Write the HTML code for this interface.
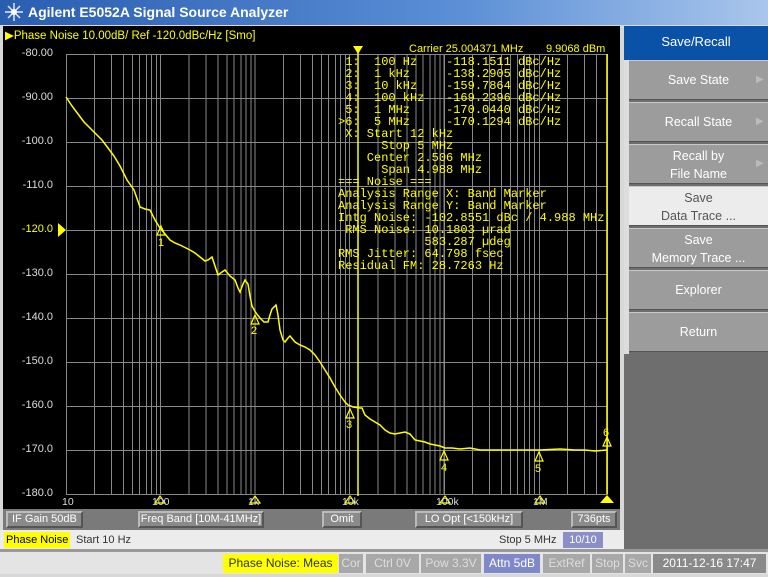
<!DOCTYPE html>
<html><head><meta charset="utf-8"><style>
*{margin:0;padding:0;box-sizing:border-box}
body{width:768px;height:577px;overflow:hidden;background:#d8d8d8;font-family:"Liberation Sans",sans-serif;position:relative}
.a{position:absolute}
#title{left:0;top:0;width:768px;height:25px;background:linear-gradient(to right,#2a5db0,#5b8fd6 60%,#a9c6ec);color:#fff;font-weight:bold;font-size:14px;line-height:25px;padding-left:28px}
#blk{left:3px;top:26px;width:617px;height:504px;background:#000}
.y{color:#ddd;font-size:11px;width:50px;text-align:right}
.mono{font-family:"Liberation Mono",monospace;font-size:12px;color:#ff0;line-height:12px;white-space:pre}
.bb{top:511px;height:17px;border:2px solid #bbb;border-right-color:#555;border-bottom-color:#555;background:#8a8a8a;color:#fff;font-size:11px;line-height:13px;text-align:center}
.btn{left:629px;width:139px;height:40px;background:#9c9c9c;color:#fff;font-size:12.5px;text-align:center;border-top:1px solid #c8c8c8;border-bottom:1px solid #555}
.st{top:554px;height:19px;font-size:12px;line-height:19px;color:#ddd;background:#a8a8a8;text-align:center}
</style></head><body>
<div id="title" class="a">Agilent E5052A Signal Source Analyzer</div>
<svg class="a" style="left:4px;top:2px" width="20" height="20" viewBox="0 0 20 20"><g stroke="#dfe8ff" stroke-width="1.5"><line x1="10" y1="1" x2="10" y2="19"/><line x1="1" y1="10" x2="19" y2="10"/><line x1="4" y1="4" x2="16" y2="16"/><line x1="16" y1="4" x2="4" y2="16"/></g><circle cx="10" cy="10" r="3" fill="#fff"/></svg>
<div id="blk" class="a"></div>
<div class="a" style="left:5px;top:28px;color:#ff0;font-size:11.5px">&#9654;Phase Noise 10.00dB/ Ref -120.0dBc/Hz [Smo]</div>
<div class="a y" style="left:3px;top:47px">-80.00</div>
<div class="a y" style="left:3px;top:91px">-90.00</div>
<div class="a y" style="left:3px;top:135px">-100.0</div>
<div class="a y" style="left:3px;top:179px">-110.0</div>
<div class="a y" style="left:3px;top:223px;color:#ff0">-120.0</div>
<div class="a y" style="left:3px;top:267px">-130.0</div>
<div class="a y" style="left:3px;top:311px">-140.0</div>
<div class="a y" style="left:3px;top:355px">-150.0</div>
<div class="a y" style="left:3px;top:399px">-160.0</div>
<div class="a y" style="left:3px;top:443px">-170.0</div>
<div class="a y" style="left:3px;top:487px">-180.0</div>
<svg class="a" style="left:0;top:0" width="620" height="530">
<g stroke="#888" stroke-width="1" fill="none">
<rect x="66.5" y="54.5" width="541" height="440"/>
<path d="M66 98.5H607M66 142.5H607M66 186.5H607M66 230.5H607M66 274.5H607M66 318.5H607M66 362.5H607M66 406.5H607M66 450.5H607"/>
<path id="dec" d="M94.5 54V494M111.5 54V494M123.5 54V494M132.5 54V494M139.5 54V494M146.5 54V494M151.5 54V494M156.5 54V494M160.5 54V494"/>
<use href="#dec" x="94.5"/><use href="#dec" x="189"/><use href="#dec" x="283.5"/>
<path d="M444.5 54V494M472.5 54V494M489.5 54V494M501.5 54V494M510.5 54V494M517.5 54V494M524.5 54V494M529.5 54V494M534.5 54V494M539.5 54V494M567.5 54V494M584.5 54V494M596.5 54V494"/>
</g>
<polygon points="58,223 66,230 58,237" fill="#ff0"/>
<g stroke="#ff0" stroke-width="1.5" fill="none">
<line x1="358" y1="46" x2="358" y2="496"/>
<line x1="607" y1="54" x2="607" y2="494"/>
<polyline points="66,97 72,106 78,114 84,122 90,128 96,134 102,140 108,148 114,156 120,166 127,180 134,190 140,207 145,209 150,210 155,220 160,228 165,234 170,240 175,243 180,245 186,248 190,250 195,253 200,257 205,261 208,260 212,257 215,266 218,275 222,272 225,270 230,276 235,280 238,288 240,292 243,284 245,280 248,284 250,296 252,306 256,313 260,318 264,322 268,322 270,315 272,309 276,305 278,315 280,330 283,340 285,342 288,338 290,336 295,342 300,345 305,347 310,350 315,355 320,362 325,370 330,378 335,387 340,395 345,402 348,405 353,407 360,408 362,408 365,415 370,419 375,422 380,425 385,430 390,433 395,434 400,433 405,432 410,434 415,440 420,441 425,442 430,444 435,445 440,446 445,448 452,448 460,449 470,448 480,450 500,450 520,450 540,450 560,449 575,450 585,450 595,451 607,450"/>
</g>
<polygon points="353,46 363,46 358,54" fill="#ff0"/>
<polygon points="600,503 614,503 607,495" fill="#ff0"/>
<g fill="none" stroke="#ff0" stroke-width="1.2">
<path d="M157,235 L161,226 L165,235 Z"/><path d="M251,324 L255,315 L259,324 Z"/><path d="M346,418 L350,409 L354,418 Z"/><path d="M440,460 L444,451 L448,460 Z"/><path d="M535,461 L539,452 L543,461 Z"/><path d="M603,446 L607,437 L611,446 Z"/>
<path d="M155,503 L160,496 L165,503 Z"/><path d="M250,503 L255,496 L260,503 Z"/><path d="M345,503 L350,496 L355,503 Z"/><path d="M440,503 L445,496 L450,503 Z"/><path d="M535,503 L540,496 L545,503 Z"/>
</g>
<g fill="#ff0" font-size="11" font-family="Liberation Sans"><text x="158" y="246">1</text><text x="251" y="334">2</text><text x="346" y="428">3</text><text x="441" y="471">4</text><text x="535" y="472">5</text><text x="603" y="436">6</text></g>
<g fill="#ddd" font-size="10.5" font-family="Liberation Sans"><text x="62" y="505">10</text><text x="152" y="505">100</text><text x="248" y="505">1k</text><text x="342" y="505">10k</text><text x="436" y="505">100k</text><text x="533" y="505">1M</text></g>
</svg>
<div class="a" style="left:409px;top:43px;color:#ff0;font-size:11px">Carrier 25.004371 MHz</div>
<div class="a" style="left:546px;top:43px;color:#ff0;font-size:11px">9.9068 dBm</div>
<div class="a mono" style="left:338px;top:56px"> 1:  100 Hz    -118.1511 dBc/Hz
 2:  1 kHz     -138.2905 dBc/Hz
 3:  10 kHz    -159.7864 dBc/Hz
 4:  100 kHz   -169.2396 dBc/Hz
 5:  1 MHz     -170.0440 dBc/Hz
&gt;6:  5 MHz     -170.1294 dBc/Hz
 X: Start 12 kHz
      Stop 5 MHz
    Center 2.506 MHz
      Span 4.988 MHz
=== Noise ===
Analysis Range X: Band Marker
Analysis Range Y: Band Marker
Intg Noise: -102.8551 dBc / 4.988 MHz
 RMS Noise: 10.1803 µrad
            583.287 µdeg
RMS Jitter: 64.798 fsec
Residual FM: 28.7263 Hz</div>
<div class="a" style="left:3px;top:509px;width:617px;height:21px;background:#7a7a7a"></div>
<div class="a bb" style="left:6px;width:77px;text-align:left;padding-left:4px">IF Gain 50dB</div>
<div class="a bb" style="left:138px;width:126px">Freq Band [10M-41MHz]</div>
<div class="a bb" style="left:322px;width:40px">Omit</div>
<div class="a bb" style="left:415px;width:108px">LO Opt [&lt;150kHz]</div>
<div class="a bb" style="left:571px;width:46px">736pts</div>
<div class="a" style="left:0;top:530px;width:624px;height:19px;background:#ececec"></div>
<div class="a" style="left:4px;top:532px;height:16px;background:#ff0;font-size:11px;line-height:16px;padding:0 2px">Phase Noise</div>
<div class="a" style="left:76px;top:532px;font-size:11px;line-height:16px;color:#333">Start 10 Hz</div>
<div class="a" style="left:499px;top:532px;font-size:11px;line-height:16px;color:#333">Stop 5 MHz</div>
<div class="a" style="left:563px;top:532px;width:40px;height:16px;background:#8a8fc8;color:#fff;font-size:11px;line-height:16px;text-align:center">10/10</div>
<div class="a" style="left:0;top:549px;width:768px;height:3px;background:#999"></div>
<div class="a" style="left:0;top:552px;width:768px;height:22px;background:#e4e4e4"></div>
<div class="a" style="left:223px;top:554px;width:115px;height:19px;background:#ff0;font-size:12px;line-height:19px;text-align:center;color:#333">Phase Noise: Meas</div>
<div class="a st" style="left:339px;width:24px">Cor</div>
<div class="a st" style="left:366px;width:53px">Ctrl 0V</div>
<div class="a st" style="left:421px;width:60px">Pow 3.3V</div>
<div class="a st" style="left:484px;width:56px;background:#7f88c8;color:#fff">Attn 5dB</div>
<div class="a st" style="left:543px;width:47px">ExtRef</div>
<div class="a st" style="left:592px;width:31px">Stop</div>
<div class="a st" style="left:625px;width:26px">Svc</div>
<div class="a st" style="left:653px;width:113px;background:#8a8a8a;color:#fff">2011-12-16 17:47</div>
<div class="a" style="left:624px;top:26px;width:144px;height:523px;background:#6e6e6e"></div>
<div class="a" style="left:624px;top:26px;width:144px;height:34px;background:#0a52a8;color:#fff;font-size:13px;line-height:32px;text-align:center">Save/Recall</div>
<div class="a" style="left:624px;top:60px;width:5px;height:294px;background:#ddd"></div>
<div class="a btn" style="top:60px;line-height:38px">Save State</div>
<div class="a btn" style="top:102px;line-height:38px">Recall State</div>
<div class="a btn" style="top:144px;line-height:18px;padding-top:2px">Recall by<br>File Name</div>
<div class="a btn" style="top:186px;line-height:18px;padding-top:2px;background:#ececec;color:#555">Save<br>Data Trace ...</div>
<div class="a btn" style="top:228px;line-height:18px;padding-top:2px">Save<br>Memory Trace ...</div>
<div class="a btn" style="top:270px;line-height:38px">Explorer</div>
<div class="a btn" style="top:312px;line-height:38px">Return</div>
<div class="a" style="left:756px;top:74px;color:#bbb;font-size:10px">&#9654;</div>
<div class="a" style="left:756px;top:116px;color:#bbb;font-size:10px">&#9654;</div>
<div class="a" style="left:756px;top:158px;color:#bbb;font-size:10px">&#9654;</div>
</body></html>
